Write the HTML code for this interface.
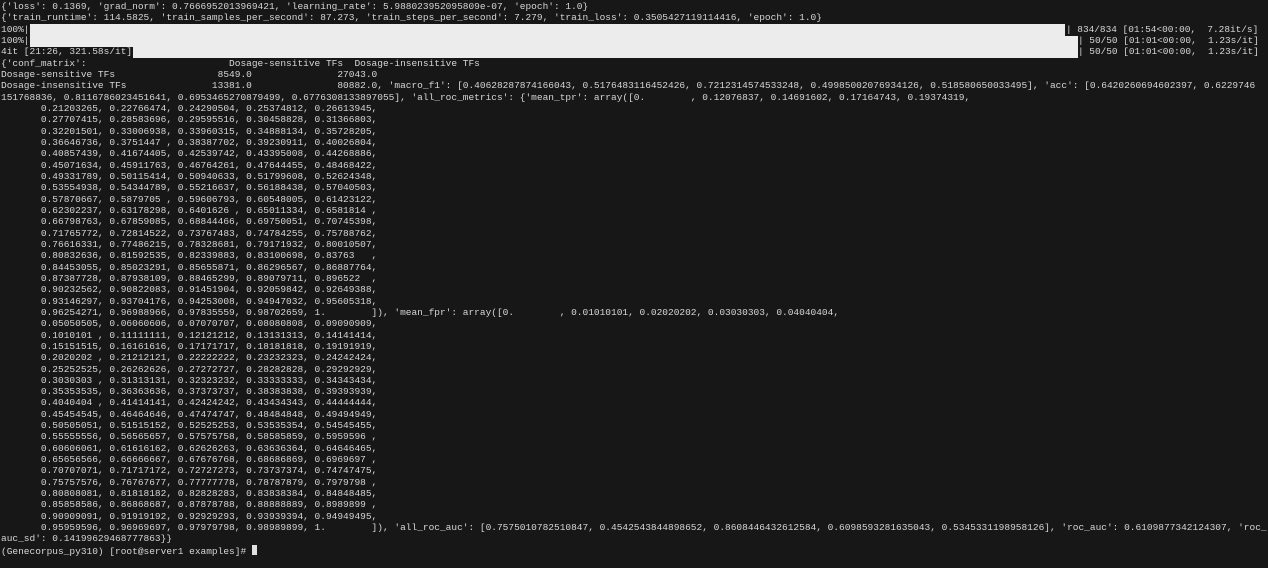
<!DOCTYPE html>
<html><head><meta charset="utf-8"><style>
html,body{margin:0;padding:0;background:#171717;width:1268px;height:568px;overflow:hidden}
#t{position:absolute;left:1px;top:1px;font-family:"Liberation Mono",monospace;font-size:9.5px;line-height:11.33px;color:#d6d6d6;white-space:pre;margin:0}
.bar{position:absolute;background:#ececec}
.r{position:absolute;font-family:"Liberation Mono",monospace;font-size:9.43px;line-height:11.33px;color:#d6d6d6;white-space:pre}
.cur{display:inline-block;width:5px;height:10px;background:#e0e0e0;vertical-align:-1px}
</style></head><body>
<div class="bar" style="left:30px;top:24px;width:1035px;height:11.5px"></div>
<div class="bar" style="left:30px;top:35.5px;width:1048px;height:11.5px"></div>
<div class="bar" style="left:133px;top:46.5px;width:945px;height:11.5px"></div>
<pre id="t">{'loss': 0.1369, 'grad_norm': 0.7666952013969421, 'learning_rate': 5.988023952095809e-07, 'epoch': 1.0}
{'train_runtime': 114.5825, 'train_samples_per_second': 87.273, 'train_steps_per_second': 7.279, 'train_loss': 0.3505427119114416, 'epoch': 1.0}
100%|
100%|
4it [21:26, 321.58s/it]
{'conf_matrix':                         Dosage-sensitive TFs  Dosage-insensitive TFs
Dosage-sensitive TFs                  8549.0               27043.0
Dosage-insensitive TFs               13381.0               80882.0, 'macro_f1': [0.40628287874166043, 0.5176483116452426, 0.7212314574533248, 0.49985002076934126, 0.518580650033495], 'acc': [0.6420260694602397, 0.6229746
151768836, 0.8116786023451641, 0.6953465270879499, 0.6776308133897055], 'all_roc_metrics': {'mean_tpr': array([0.        , 0.12076837, 0.14691602, 0.17164743, 0.19374319,
       0.21203265, 0.22766474, 0.24290504, 0.25374812, 0.26613945,
       0.27707415, 0.28583696, 0.29595516, 0.30458828, 0.31366803,
       0.32201501, 0.33006938, 0.33960315, 0.34888134, 0.35728205,
       0.36646736, 0.3751447 , 0.38387702, 0.39230911, 0.40026804,
       0.40857439, 0.41674405, 0.42539742, 0.43395008, 0.44268886,
       0.45071634, 0.45911763, 0.46764261, 0.47644455, 0.48468422,
       0.49331789, 0.50115414, 0.50940633, 0.51799608, 0.52624348,
       0.53554938, 0.54344789, 0.55216637, 0.56188438, 0.57040503,
       0.57870667, 0.5879705 , 0.59606793, 0.60548005, 0.61423122,
       0.62302237, 0.63178298, 0.6401626 , 0.65011334, 0.6581814 ,
       0.66798763, 0.67859085, 0.68844466, 0.69750051, 0.70745398,
       0.71765772, 0.72814522, 0.73767483, 0.74784255, 0.75788762,
       0.76616331, 0.77486215, 0.78328681, 0.79171932, 0.80010507,
       0.80832636, 0.81592535, 0.82339883, 0.83100698, 0.83763   ,
       0.84453055, 0.85023291, 0.85655871, 0.86296567, 0.86887764,
       0.87387728, 0.87938109, 0.88465299, 0.89079711, 0.896522  ,
       0.90232562, 0.90822083, 0.91451904, 0.92059842, 0.92649388,
       0.93146297, 0.93704176, 0.94253008, 0.94947032, 0.95605318,
       0.96254271, 0.96988966, 0.97835559, 0.98702659, 1.        ]), 'mean_fpr': array([0.        , 0.01010101, 0.02020202, 0.03030303, 0.04040404,
       0.05050505, 0.06060606, 0.07070707, 0.08080808, 0.09090909,
       0.1010101 , 0.11111111, 0.12121212, 0.13131313, 0.14141414,
       0.15151515, 0.16161616, 0.17171717, 0.18181818, 0.19191919,
       0.2020202 , 0.21212121, 0.22222222, 0.23232323, 0.24242424,
       0.25252525, 0.26262626, 0.27272727, 0.28282828, 0.29292929,
       0.3030303 , 0.31313131, 0.32323232, 0.33333333, 0.34343434,
       0.35353535, 0.36363636, 0.37373737, 0.38383838, 0.39393939,
       0.4040404 , 0.41414141, 0.42424242, 0.43434343, 0.44444444,
       0.45454545, 0.46464646, 0.47474747, 0.48484848, 0.49494949,
       0.50505051, 0.51515152, 0.52525253, 0.53535354, 0.54545455,
       0.55555556, 0.56565657, 0.57575758, 0.58585859, 0.5959596 ,
       0.60606061, 0.61616162, 0.62626263, 0.63636364, 0.64646465,
       0.65656566, 0.66666667, 0.67676768, 0.68686869, 0.6969697 ,
       0.70707071, 0.71717172, 0.72727273, 0.73737374, 0.74747475,
       0.75757576, 0.76767677, 0.77777778, 0.78787879, 0.7979798 ,
       0.80808081, 0.81818182, 0.82828283, 0.83838384, 0.84848485,
       0.85858586, 0.86868687, 0.87878788, 0.88888889, 0.8989899 ,
       0.90909091, 0.91919192, 0.92929293, 0.93939394, 0.94949495,
       0.95959596, 0.96969697, 0.97979798, 0.98989899, 1.        ]), 'all_roc_auc': [0.7575010782510847, 0.4542543844898652, 0.8608446432612584, 0.6098593281635043, 0.5345331198958126], 'roc_auc': 0.6109877342124307, 'roc_
auc_sd': 0.14199629468777863}}
(Genecorpus_py310) [root@server1 examples]# <span class="cur"></span></pre>
<div class="r" style="left:1066px;top:23.7px">| 834/834 [01:54&lt;00:00,  7.28it/s]</div>
<div class="r" style="left:1078px;top:35px">| 50/50 [01:01&lt;00:00,  1.23s/it]</div>
<div class="r" style="left:1078px;top:46.3px">| 50/50 [01:01&lt;00:00,  1.23s/it]</div>
</body></html>
